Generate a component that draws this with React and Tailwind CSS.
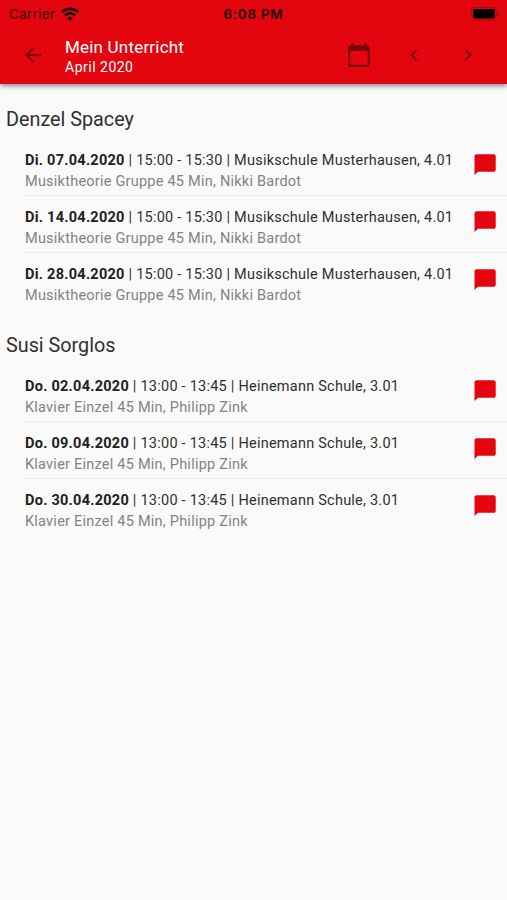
const lessons = [
  {
    student: 'Denzel Spacey',
    subject: 'Musiktheorie Gruppe 45 Min, Nikki Bardot',
    time: '15:00 - 15:30',
    place: 'Musikschule Musterhausen, 4.01',
    dates: ['Di. 07.04.2020', 'Di. 14.04.2020', 'Di. 28.04.2020'],
  },
  {
    student: 'Susi Sorglos',
    subject: 'Klavier Einzel 45 Min, Philipp Zink',
    time: '13:00 - 13:45',
    place: 'Heinemann Schule, 3.01',
    dates: ['Do. 02.04.2020', 'Do. 09.04.2020', 'Do. 30.04.2020'],
  },
]

function Icon({ d, className }) {
  return <svg viewBox="0 0 24 24" fill="currentColor" className={className}><path d={d} /></svg>
}

function StatusBar() {
  return (
    <div className="grid h-[27px] grid-cols-[1fr_auto_1fr] items-center pl-[9px] pr-[6px] font-['Inter',sans-serif] text-[13.5px] text-[#3a0003]">
      <div className="flex items-center gap-[6px]">
        <span className="pt-px tracking-[0.3px]">Carrier</span>
        <svg viewBox="0 0 18 14" className="h-[14px] w-[18px]" fill="none" stroke="#1c0001" strokeWidth="2.6">
          <path d="M.9 5.2a11.5 11.5 0 0 1 16.2 0M3.8 8.4a7.3 7.3 0 0 1 10.4 0" />
          <path d="M9 14 6.1 10.9a4 4 0 0 1 5.8 0z" fill="#1c0001" stroke="none" />
        </svg>
      </div>
      <span className="mr-[3px] pt-px text-center font-semibold tracking-[0.7px] text-[#1c0001]">6:08 PM</span>
      <svg viewBox="0 0 30 14" className="h-[14px] w-[30px] justify-self-end">
        <rect x="0.5" y="0.5" width="25" height="12.5" rx="3.5" fill="none" stroke="#a8060b" />
        <rect x="2" y="2" width="22" height="9.5" rx="2" fill="#000" />
        <path d="M27.2 4.8c1.9.8 1.9 3.2 0 4z" fill="#a8060b" />
      </svg>
    </div>
  )
}

function Header() {
  return (
    <header className="relative h-[84px] bg-[#e3060f] shadow-[0_2px_5px_rgba(0,0,0,0.45)]">
      <StatusBar />
      <div className="flex h-[57px] items-center pl-[21px] pr-[27px] text-[#7d060b]">
        <Icon className="relative -top-px size-6" d="M20 11H7.83l5.59-5.59L12 4l-8 8 8 8 1.41-1.41L7.83 13H20v-2z" />
        <div className="ml-5 flex-1 pt-1 text-white">
          <h1 className="text-[17px] leading-[20px] tracking-[0.2px]">Mein Unterricht</h1>
          <p className="text-[14px] leading-[21px] tracking-[0.5px]">April 2020</p>
        </div>
        <Icon className="relative -top-px size-[26px]" d="M20.1 3H19V1h-2v2H7V1H5v2H3.9c-1.1 0-1.9.9-1.9 2v15.9c0 1.1.8 2.1 1.9 2.1h16.2c1.1 0 1.9-1 1.9-2.1V5c0-1.1-.8-2-1.9-2zm0 18H3.9V8.2h16.2V21z" />
        <Icon className="relative -top-px ml-[30px] size-6" d="M15.41 7.41L14 6l-6 6 6 6 1.41-1.41L10.83 12z" />
        <Icon className="relative -top-px ml-[30px] size-6" d="M10 6L8.59 7.41 13.17 12l-4.58 4.59L10 18l6-6z" />
      </div>
    </header>
  )
}

function Lesson({ date, group }) {
  return (
    <li className="flex h-[57.4px] items-start border-b border-[#eeeeee] pl-[5px] pr-[9px] pt-[11px] last:border-transparent">
      <div className="flex-1 whitespace-nowrap text-[14.5px] leading-[21px] tracking-[0.235px]">
        <p className="text-[#303030]"><b className="tracking-[0.26px] text-[#212121]">{date}</b> | {group.time} | {group.place}</p>
        <p className="text-[#838383]">{group.subject}</p>
      </div>
      <Icon className="mt-[2.5px] size-[26px] text-[#e3060f]" d="M20 2H4.2c-1.1 0-1.9.9-1.9 2v17.2l3.2-2.9H20c1.1 0 1.9-.9 1.9-2V4c0-1.1-.8-2-1.9-2z" />
    </li>
  )
}

export default function App() {
  return (
    <div className="h-[900px] w-[507px] overflow-hidden bg-[#fafafa] font-['Roboto',sans-serif]">
      <Header />
      <main>
        {lessons.map((group) => (
          <section key={group.student} className="pt-[0.5px]">
            <h2 className="h-[54px] pl-[6px] pt-[21.5px] text-[19.8px] leading-[28px] text-[#303030]">{group.student}</h2>
            <ul className="ml-5 h-[171.7px]">
              {group.dates.map((date) => <Lesson key={date} date={date} group={group} />)}
            </ul>
          </section>
        ))}
      </main>
    </div>
  )
}
